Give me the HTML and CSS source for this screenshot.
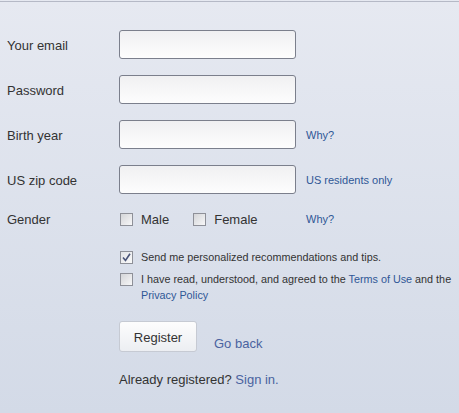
FILE: index.html
```html
<!DOCTYPE html>
<html>
<head>
<meta charset="utf-8">
<link rel="stylesheet" href="styles.css">
</head>
<body>
<div class="page">
  <form class="form">
    <div class="row">
      <label class="label">Your email</label>
      <span class="field"></span>
    </div>
    <div class="row">
      <label class="label">Password</label>
      <span class="field"></span>
    </div>
    <div class="row">
      <label class="label">Birth year</label>
      <span class="field"></span>
      <a class="hint">Why?</a>
    </div>
    <div class="row">
      <label class="label">US zip code</label>
      <span class="field"></span>
      <a class="hint">US residents only</a>
    </div>
    <div class="row gender">
      <label class="label">Gender</label>
      <div class="choices">
        <span class="choice"><span class="box"></span>Male</span>
        <span class="choice"><span class="box"></span>Female</span>
      </div>
      <a class="hint">Why?</a>
    </div>
    <div class="opts">
      <div class="opt"><span class="box checked"><svg width="9" height="9" viewBox="0 0 9 9"><path d="M1 4.5 L3.5 7.5 L8 0.8" fill="none" stroke="#4a5478" stroke-width="1.6"/></svg></span><span>Send me personalized recommendations and tips.</span></div>
      <div class="opt"><span class="box"></span><span>I have read, understood, and agreed to the <a>Terms of Use</a> and the <a>Privacy Policy</a></span></div>
    </div>
    <div class="actions">
      <span class="btn">Register</span>
      <a class="back">Go back</a>
    </div>
    <p class="signin">Already registered? <a>Sign in.</a></p>
  </form>
</div>
</body>
</html>
```
FILE: styles.css
```css
html, body { margin: 0; padding: 0; }
body {
  width: 459px;
  height: 413px;
  background: linear-gradient(#e6e9f1, #d3dae7);
  font-family: "Liberation Sans", Arial, sans-serif;
  color: #333;
  overflow: hidden;
}
.page {
  border-top: 1px solid #b5b9c6;
  margin-top: 1px;
  height: 411px;
}
.form {
  padding: 28px 0 0 7px;
  display: flex;
  flex-direction: column;
}
.row {
  display: flex;
  align-items: center;
  height: 29px;
  margin-bottom: 16px;
}
.label {
  width: 112px;
  font-size: 13px;
  color: #333;
  padding-top: 1px;
}
.field {
  box-sizing: border-box;
  width: 177px;
  height: 29px;
  border: 1px solid #7b7f8c;
  border-radius: 3px;
  background: linear-gradient(#f0f0f2, #fdfdfd);
}
.hint {
  margin-left: 10px;
  font-size: 11px;
  color: #2f5796;
}
.row.gender { height: 18px; margin-bottom: 21px; }
.choices { display: flex; width: 177px; }
.choice {
  display: flex;
  align-items: center;
  font-size: 13px;
  margin-right: 23px;
}
.choice .box { margin: 0 8px 0 1px; }
.box {
  box-sizing: border-box;
  width: 13px;
  height: 13px;
  border: 1px solid #8e9098;
  background: linear-gradient(135deg, #d4d5d8, #f7f7f8);
  display: inline-flex;
  align-items: center;
  justify-content: center;
  flex: none;
}
.box.checked { background: linear-gradient(135deg, #e2e3e6, #fafafa); }
.opts { padding-left: 112px; display: flex; flex-direction: column; gap: 6px; }
.opt {
  display: flex;
  align-items: flex-start;
  font-size: 10.8px;
  line-height: 16px;
  color: #333;
}
.opt .box { margin: 2px 8px 0 1px; }
.opt a { color: #2f5796; }
.actions {
  padding-left: 112px;
  margin-top: 18px;
  display: flex;
  align-items: flex-end;
}
.btn {
  box-sizing: border-box;
  width: 78px;
  height: 31px;
  border: 1px solid #c6cad3;
  border-radius: 3px;
  background: linear-gradient(#fdfdfd, #eceef2);
  font-size: 13px;
  display: flex;
  align-items: center;
  justify-content: center;
  color: #333;
  padding-top: 1px;
}
.back {
  margin-left: 17px;
  font-size: 13px;
  color: #4a63a0;
  line-height: 15px;
  margin-bottom: 1px;
}
.signin {
  margin: 20px 0 0 112px;
  font-size: 13px;
  color: #333;
}
.signin a { color: #4a63a0; }
```
